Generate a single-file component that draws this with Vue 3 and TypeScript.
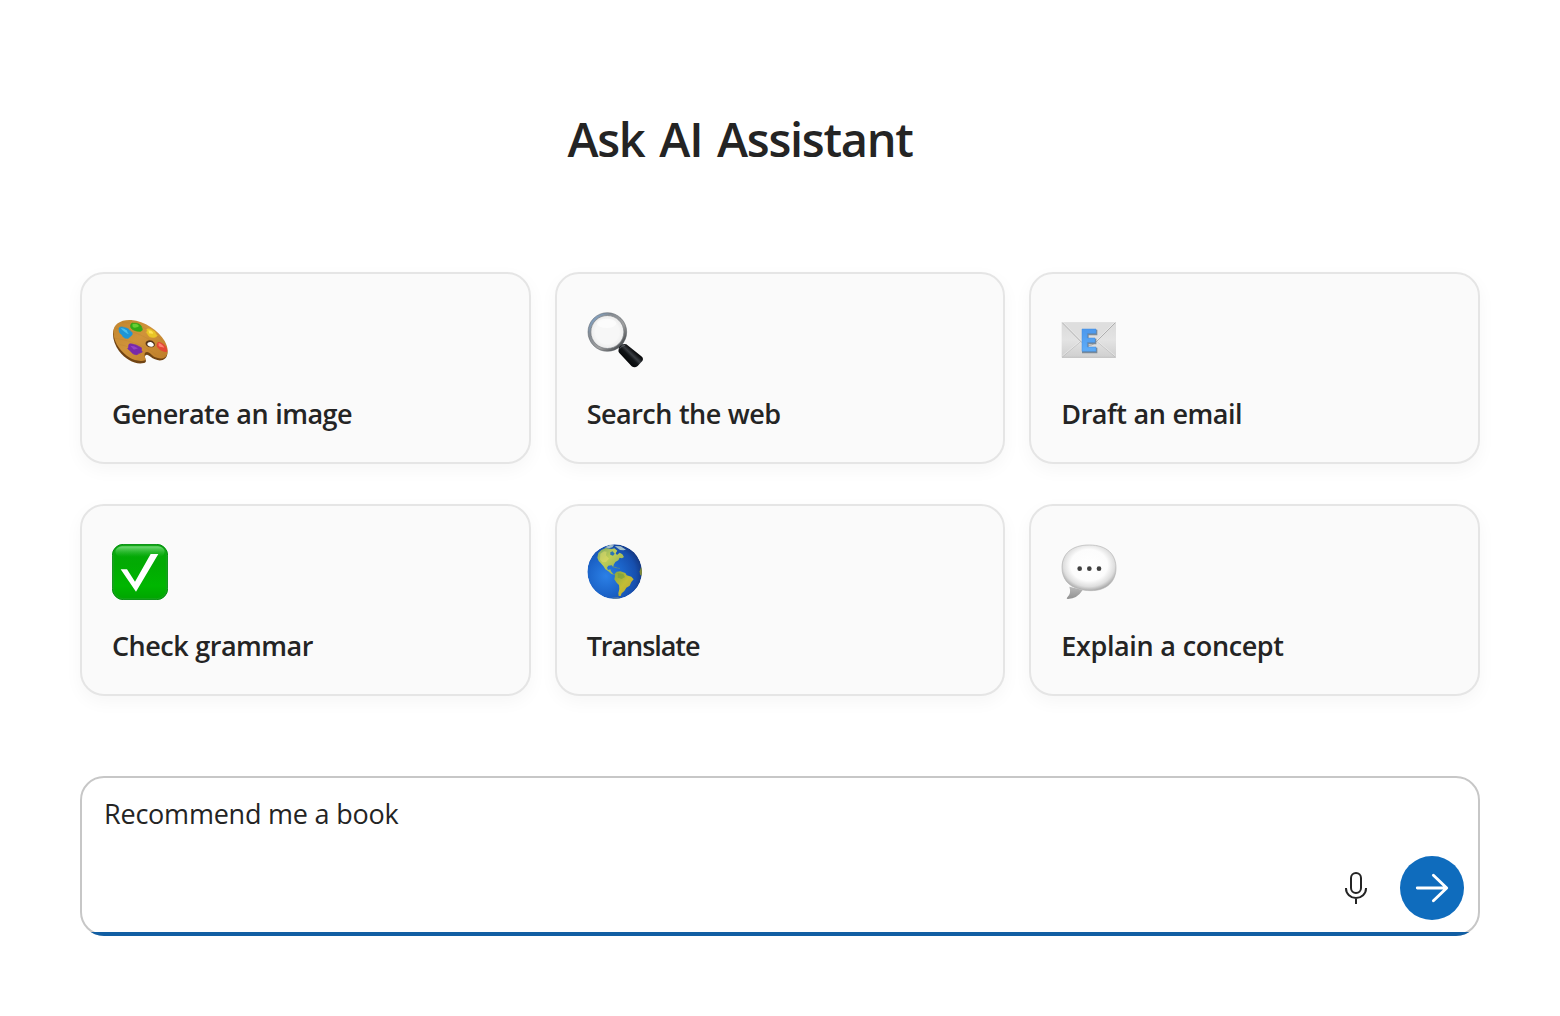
<script setup lang="ts">
import { ref } from 'vue'

interface Suggestion {
  icon: 'palette' | 'search' | 'email' | 'check' | 'globe' | 'speech'
  label: string
  tracking: number
}

const suggestions: Suggestion[] = [
  { icon: 'palette', label: 'Generate an image', tracking: -0.52 },
  { icon: 'search', label: 'Search the web', tracking: -0.52 },
  { icon: 'email', label: 'Draft an email', tracking: -0.49 },
  { icon: 'check', label: 'Check grammar', tracking: -0.5 },
  { icon: 'globe', label: 'Translate', tracking: -1.05 },
  { icon: 'speech', label: 'Explain a concept', tracking: -0.4 },
]

const prompt = ref('Recommend me a book')
</script>

<template>
  <main class="page">
    <h1 class="title">Ask AI Assistant</h1>

    <section class="cards">
      <button v-for="item in suggestions" :key="item.label" class="card" type="button">
        <svg v-if="item.icon === 'palette'" class="emoji" viewBox="36 21 168 168">
          <defs>
            <linearGradient id="wood" x1="0" y1="0" x2="1" y2="1">
              <stop offset="0" stop-color="#c1852f" />
              <stop offset=".45" stop-color="#d0933a" />
              <stop offset="1" stop-color="#bd7c28" />
            </linearGradient>
          </defs>
          <g transform="translate(-1 5)">
            <path fill="#714413" d="M40 83C39 59 61 42 94 44c39 3 82 32 100 64 11 20 12 39 3 47-9 8-20 8-31 3-10-4-17-13-24-14-7 1-8 8-4 15 2 5 0 9-5 10-25 6-54-9-75-36-11-15-18-34-18-50z" />
          </g>
          <path fill="url(#wood)" d="M40 80C40 58 62 43 94 45c39 3 82 32 100 63 11 20 12 38 3 47-8 7-20 7-31 2-10-4-16-16-25-16-8 0-9 10-5 18 2 5-1 8-6 8-25 4-51-10-72-37-11-15-18-34-18-50z" />
          <g fill="none" stroke="#a9702a" stroke-opacity=".4" stroke-width="1.3">
            <path d="M45 100c35 5 86 18 124 50M48 70c50 4 105 31 146 65M66 53c43-2 91 25 120 52M58 119c24 3 44 13 65 31" />
          </g>
          <path fill="#54351c" d="M137 113c2-9 19-11 26 0 5 9-1 13-8 14-10 1-20-6-18-14z" />
          <path fill="#fff" d="M142 117c1-7 13-8 18-1 4 6-1 9-6 9-7 0-13-4-12-8z" />
          <path fill="#1e95d5" stroke="#1e95d5" stroke-width="2" d="M58 68c7-5 14 0 20 1 9 2 9 7 17 12 4 5 1 11-4 13-4 5-7 7-11 6-7 0-12-5-14-11-7-3-11-12-8-21z" />
          <path fill="#4bbfec" d="M62 70c9-2 13 4 18 6 3 5 3 10 8 12-9-2-18-9-26-18z" />
          <path fill="#32aa16" stroke="#32aa16" stroke-width="2" d="M96 54c8 2 14-2 22 4 8 5 6 9 9 14 1 5-5 8-10 7-9 0-21-5-24-10-3-7-2-9 3-15z" />
          <path fill="#68cf33" d="M98 57c8 1 14-2 19 6-5 6-8 3-12 5-7 0-9-4-7-11z" />
          <path fill="#e9c526" stroke="#e9c526" stroke-width="1.5" d="M140 73c8-4 14 1 19 4 8 2 7 9 13 15-6 7-18 7-25 2l-8-12c3-3 3-5 1-9z" />
          <path fill="#ffe251" d="M145 76c7 0 11 2 15 8-3 5-7 1-12 2z" />
          <path fill="#e34735" d="M174 111c8-1 14 4 20 10 7 7 9 14 7 19-8 3-20-2-26-10-8-6-5-13-1-19z" />
          <path fill="#ff8170" d="M176 114c9 3 14 8 17 14-8-3-12 0-17-5z" />
          <path fill="#7829aa" stroke="#7829aa" stroke-width="2" d="M87 118c6-4 14 1 21 2l16 8c2 5-2 8 3 13-6 4-12 4-16 8-10 1-15-5-19-10l-9-8c5-3 1-7 4-13z" />
          <path fill="#9341c8" d="M91 122c8 0 14 2 23 8-6 2-9 5-14 3z" />
        </svg>

        <svg v-else-if="item.icon === 'search'" class="emoji" viewBox="36 21 168 168">
          <defs>
            <linearGradient id="ring" x1="0" y1="0" x2="1" y2="1">
              <stop offset="0" stop-color="#80aede" />
              <stop offset=".3" stop-color="#858b92" />
              <stop offset=".62" stop-color="#a0a0a0" />
              <stop offset="1" stop-color="#252a2f" />
            </linearGradient>
            <linearGradient id="handle" gradientUnits="userSpaceOnUse" x1="150" y1="165" x2="180" y2="134">
              <stop offset="0" stop-color="#050708" />
              <stop offset=".4" stop-color="#111417" />
              <stop offset=".6" stop-color="#3a3e43" />
              <stop offset=".8" stop-color="#17191c" />
              <stop offset="1" stop-color="#000" />
            </linearGradient>
            <radialGradient id="lens">
              <stop offset=".65" stop-color="#f7f7f7" />
              <stop offset=".9" stop-color="#ececec" />
              <stop offset="1" stop-color="#b9bdc1" />
            </radialGradient>
          </defs>
          <path d="M132 117l11 11" stroke="#55595e" stroke-width="14" />
          <circle cx="97" cy="81" r="54" fill="url(#lens)" stroke="url(#ring)" stroke-width="8" />
          <circle cx="97" cy="81" r="58" fill="none" stroke="#545a61" stroke-width="1.5" />
          <circle cx="97" cy="81" r="49.5" fill="none" stroke="#5f6469" stroke-width="1.8" />
          <ellipse cx="95" cy="55" rx="29" ry="14" fill="#fff" opacity=".6" />
          <path d="M131 134q-1-6 5-12 8-8 18-4l45 36q8 6 3 14l-14 15q-9 7-18 1l-37-40q-4-4-2-10z" fill="url(#handle)" />
          <path d="M134 131q5-9 16-10" fill="none" stroke="#63676b" stroke-width="2.5" />
        </svg>

        <svg v-else-if="item.icon === 'email'" class="emoji" viewBox="34 21 168 168">
          <defs>
            <linearGradient id="paper" x1="0" y1="0" x2="0" y2="1">
              <stop offset="0" stop-color="#dadada" />
              <stop offset=".5" stop-color="#e3e3e3" />
              <stop offset="1" stop-color="#cfcfcf" />
            </linearGradient>
            <linearGradient id="letter" x1="0" y1="0" x2="0" y2="1">
              <stop offset="0" stop-color="#4c98ed" />
              <stop offset="1" stop-color="#5fadf8" />
            </linearGradient>
          </defs>
          <rect x="36" y="52" width="163" height="106" rx="2" fill="url(#paper)" />
          <path d="M38 156l59-50M197 156l-59-50" stroke="#bcbcbc" stroke-width="2.4" />
          <path d="M38 153l61-51M197 153l-61-51" stroke="#f4f4f4" stroke-width="1.5" />
          <path d="M38 53l59 60q20 18 40 0l60-60" fill="#dedede" stroke="#a6a6a6" stroke-width="2.6" />
          <path d="M40 52l57 57M195 52l-57 57" stroke="#f4f4f4" stroke-width="1.5" />
          <path d="M37 157h161" stroke="#b8b8b8" stroke-width="2" />
          <path d="M99 76h42v13h-26v14h23v13h-23v14h26v13H99z" fill="#71879a" stroke="#788999" stroke-width="4" />
          <path d="M97 72h42v13h-26v14h23v13h-23v14h26v13H97z" fill="url(#letter)" stroke="#438de0" stroke-width="1.5" />
        </svg>

        <svg v-else-if="item.icon === 'check'" class="emoji" viewBox="36 21 168 168">
          <defs>
            <linearGradient id="green" x1="0" y1="0" x2="0" y2="1">
              <stop offset="0" stop-color="#05a90a" />
              <stop offset=".35" stop-color="#02aa03" />
              <stop offset=".75" stop-color="#00b600" />
              <stop offset="1" stop-color="#00a500" />
            </linearGradient>
            <linearGradient id="gloss" x1="0" y1="0" x2="0" y2="1">
              <stop offset="0" stop-color="#72da76" />
              <stop offset="1" stop-color="#38bd3c" stop-opacity="0" />
            </linearGradient>
          </defs>
          <rect x="37" y="22" width="166" height="166" rx="33" fill="url(#green)" stroke="#078f12" stroke-width="3" />
          <rect x="41" y="26" width="158" height="159" rx="29" fill="none" stroke="#16a51b" stroke-width="3" />
          <rect x="46" y="28" width="148" height="32" rx="20" fill="url(#gloss)" />
          <path d="M62 97h19l24 37 47-83h23l-67 113z" fill="#fff" />
        </svg>

        <svg v-else-if="item.icon === 'globe'" class="emoji" viewBox="36 21 168 168">
          <defs>
            <radialGradient id="ocean" cx=".34" cy=".58" r=".69">
              <stop offset="0" stop-color="#2b80e6" />
              <stop offset=".5" stop-color="#1b63c8" />
              <stop offset=".8" stop-color="#174fae" />
              <stop offset="1" stop-color="#14357c" />
            </radialGradient>
            <linearGradient id="land" x1="0" y1="0" x2="1" y2="1">
              <stop offset="0" stop-color="#79a566" />
              <stop offset=".4" stop-color="#bfce56" />
              <stop offset="1" stop-color="#7fa05a" />
            </linearGradient>
            <linearGradient id="land-south" x1="0" y1="0" x2="1" y2="1">
              <stop offset="0" stop-color="#86a842" />
              <stop offset=".5" stop-color="#c4bd35" />
              <stop offset="1" stop-color="#b9a234" />
            </linearGradient>
            <clipPath id="globe-clip"><circle cx="119" cy="104" r="82" /></clipPath>
          </defs>
          <g clip-path="url(#globe-clip)">
            <circle cx="119" cy="104" r="82" fill="url(#ocean)" />
            <path d="M67 62L70 48 79 39 92 33l18 3 8-2 9 7-5 8 4 5 8-7 8 5 5 8-6 4-7-2-4 8-9 5-5 8-1 7-5-5-10 1-4 6 3 7 7-2 2 6 5 6 5 4-9-2-9-8-9-6-6-10-8-9-6-6z" fill="url(#land)" />
            <path d="M106 46l7-3 6 7-5 6-8-3z" fill="#2b74b5" />
            <path d="M90 31l15-7 12 1-5 6-11 3zm29-4l18 1 16 10-8 2-10-1-8-6z" fill="#a3bfc8" />
            <path d="M110 88l12 2 7 3-5 1-13-4zm18 4l8 1-3 2-6-1z" fill="#5f8d84" />
            <path d="M118 112l7-8 11-1 15 5 4 7 14 4 7 8-7 8-5 11-10 6-6 10-8 7-3 8-6 0-1-8 3-13-1-12-7-7-7-10 2-11z" fill="url(#land-south)" />
            <path d="M128 108l17 3 5 9-10 6-12-4z" fill="#749f40" opacity=".6" />
            <path d="M198 91l6 2-3 24-6-4-1-10z" fill="#7f8a3a" />
            <path d="M111 182l18-1 8 4-18 4z" fill="#5c80a5" />
            <path d="M76 50l11-7 8 1-2 11 9 10-9 10-11 1-7-8z" fill="#e1dd6a" opacity=".55" />
          </g>
        </svg>

        <svg v-else class="emoji" viewBox="34 21 168 168">
          <defs>
            <radialGradient id="bubble" cx=".5" cy=".44" r=".57">
              <stop offset="0" stop-color="#fff" />
              <stop offset=".6" stop-color="#fcfcfc" />
              <stop offset=".83" stop-color="#dedede" />
              <stop offset="1" stop-color="#a5a5a5" />
            </radialGradient>
            <linearGradient id="tail" x1="0" y1="0" x2="0" y2="1">
              <stop offset="0" stop-color="#bababa" />
              <stop offset="1" stop-color="#919191" />
            </linearGradient>
          </defs>
          <path d="M59 149q7 20-7 33-3 4 3 4 28-1 44-27z" fill="url(#tail)" />
          <path d="M119 24c54 0 80 29 80 69 0 39-26 68-76 68-13 0-24-2-34-5-35-8-52-34-52-64 0-40 27-68 82-68z" fill="url(#bubble)" stroke="#b3b3b3" stroke-width="2" />
          <g fill="#404040">
            <circle cx="90" cy="95" r="7" />
            <circle cx="119" cy="95" r="7" />
            <circle cx="148" cy="95" r="7" />
          </g>
        </svg>

        <span class="label" :style="{ letterSpacing: item.tracking + 'px' }">{{ item.label }}</span>
      </button>
    </section>

    <section class="composer">
      <div class="prompt">{{ prompt }}</div>
      <div class="actions">
        <button class="mic" type="button" aria-label="Dictate">
          <svg width="24" height="34" viewBox="0 0 24 34" fill="none" stroke="#242424" stroke-width="2" stroke-linecap="round">
            <rect x="7" y="2" width="10" height="20" rx="5" />
            <path d="M2 17v.5a10 9.5 0 0 0 20 0V17M12 27v6" stroke-linecap="butt" />
          </svg>
        </button>
        <button class="send" type="button" aria-label="Send">
          <svg width="64" height="64" viewBox="0 0 64 64" fill="none" stroke="#fff" stroke-width="2.9" stroke-linecap="round" stroke-linejoin="round">
            <path d="M17.3 32H46.5M33.4 19.2L46.7 32 33.4 44.8" />
          </svg>
        </button>
      </div>
    </section>
  </main>
</template>

<style>
body {
  background: #fff;
}
</style>

<style scoped>
.page {
  box-sizing: border-box;
  min-height: 1016px;
  padding: 107px 80px 80px;
  font-family: 'Segoe UI', 'Open Sans', sans-serif;
  color: #242424;
  background: #fff;
}
.title {
  margin: 0 80px 101px 0;
  font-size: 47px;
  line-height: 64px;
  font-weight: 600;
  letter-spacing: -1.3px;
  word-spacing: 4px;
  text-align: center;
  white-space: nowrap;
}
.cards {
  display: grid;
  grid-template-columns: repeat(3, 1fr);
  gap: 40px 24px;
}
.card {
  box-sizing: border-box;
  display: flex;
  flex-direction: column;
  align-items: flex-start;
  height: 192px;
  padding: 38px 30px 0;
  border: 2px solid #e5e5e5;
  border-radius: 24px;
  background: #fafafa;
  box-shadow: 0 6px 18px rgba(0, 0, 0, 0.04);
  font: inherit;
  color: inherit;
}
.emoji {
  display: block;
  width: 56px;
  height: 56px;
}
.label {
  margin-top: 26px;
  font-size: 27px;
  line-height: 40px;
  font-weight: 600;
  word-spacing: 0.6px;
  white-space: nowrap;
}
.composer {
  position: relative;
  box-sizing: border-box;
  display: flex;
  flex-direction: column;
  justify-content: space-between;
  height: 160px;
  margin-top: 80px;
  padding: 16px 14px 14px 22px;
  border: 2px solid #c7c7c7;
  border-radius: 24px;
}
.composer::after {
  content: '';
  position: absolute;
  inset: -2px;
  border-radius: 24px;
  background: linear-gradient(#115ea3, #115ea3) bottom / 100% 4px no-repeat;
  pointer-events: none;
}
.prompt {
  font-size: 27px;
  line-height: 40px;
  letter-spacing: -0.22px;
  white-space: nowrap;
}
.actions {
  display: flex;
  justify-content: flex-end;
  align-items: center;
  gap: 12px;
}
.mic,
.send {
  display: flex;
  align-items: center;
  justify-content: center;
  width: 64px;
  height: 64px;
  padding: 0;
  border: 0;
  border-radius: 50%;
  background: transparent;
}
.send {
  background: #0f6cbd;
}
</style>
